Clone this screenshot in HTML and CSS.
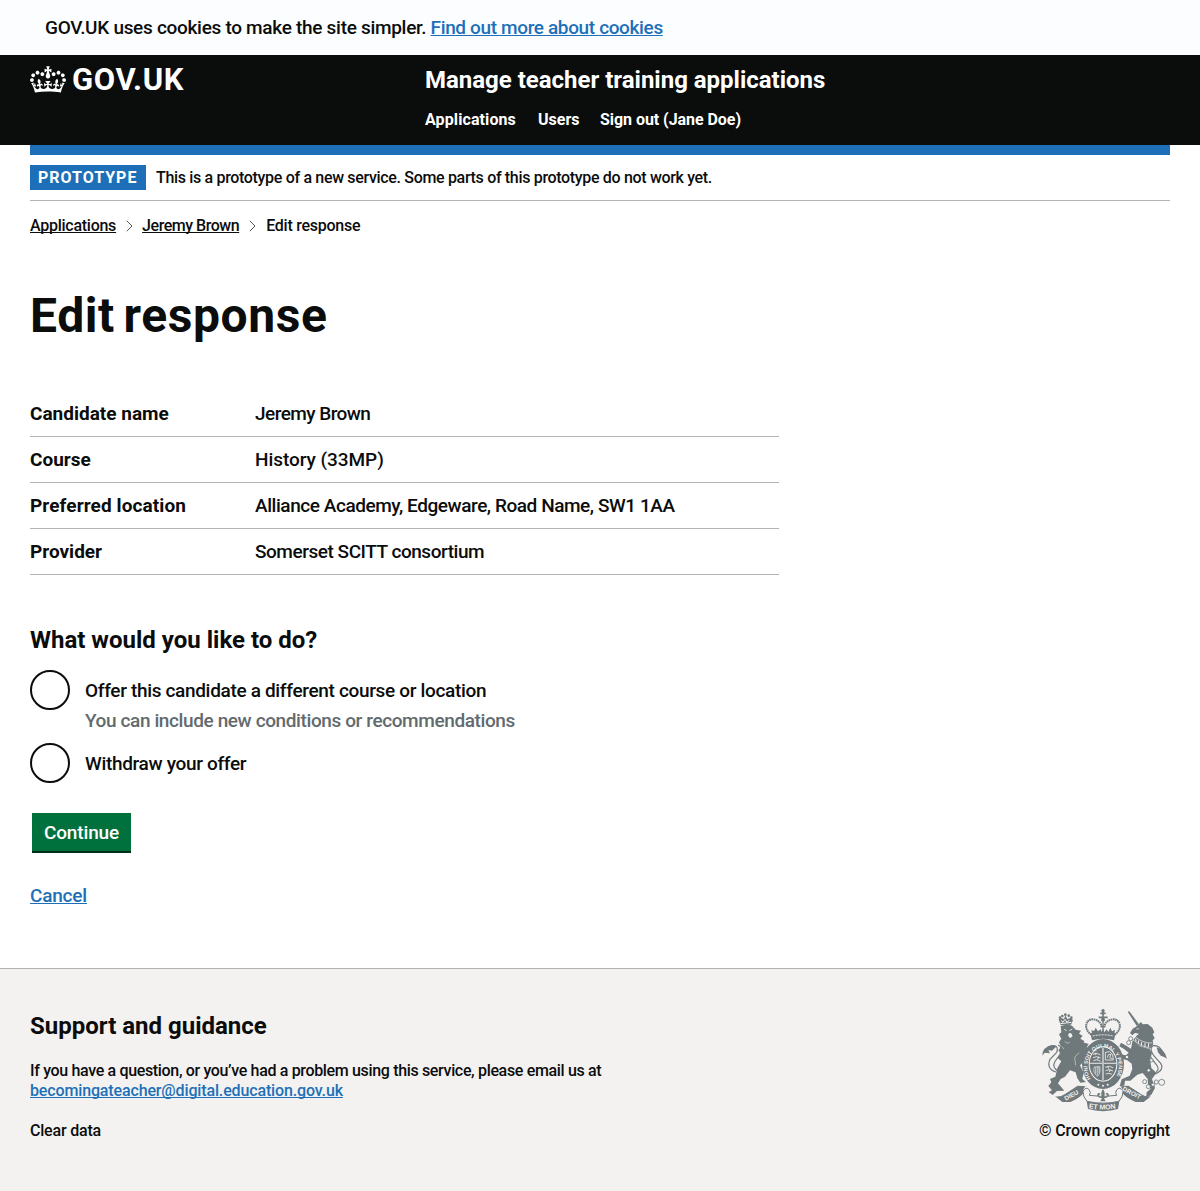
FILE: index.html
```html
<!DOCTYPE html>
<html lang="en">
<head>
<meta charset="utf-8">
<title>Edit response - Manage teacher training applications</title>
<link rel="stylesheet" href="styles.css">
</head>
<body>
<div class="cookie-banner"><span class="cookie-text">GOV.UK uses cookies to make the site simpler. </span><a class="link cookie-link" href="#">Find out more about cookies</a></div>

<header class="header">
  <div class="header-inner">
    <a class="logo" href="#">
      <svg class="crown" viewBox="0 0 132 97" width="36" height="27" aria-hidden="true"><path fill="currentColor" fill-rule="evenodd" d="M25 30.2c3.5 1.5 7.7-.2 9.1-3.7 1.5-3.6-.2-7.8-3.9-9.2-3.6-1.4-7.6.3-9.1 3.9-1.4 3.5.3 7.5 3.9 9zM9 39.5c3.6 1.5 7.8-.2 9.2-3.7 1.5-3.6-.2-7.8-3.9-9.1-3.6-1.5-7.6.2-9.1 3.8-1.4 3.5.3 7.5 3.8 9zM4.4 57.2c3.5 1.5 7.7-.2 9.1-3.8 1.5-3.6-.2-7.7-3.9-9.1-3.5-1.5-7.6.3-9.1 3.8-1.4 3.5.3 7.6 3.9 9.1zm38.3-21.4c3.5 1.5 7.7-.2 9.1-3.8 1.5-3.6-.2-7.7-3.9-9.1-3.6-1.5-7.6.3-9.1 3.8-1.3 3.6.4 7.7 3.9 9.1zm64.4-5.6c-3.6 1.5-7.8-.2-9.1-3.7-1.5-3.6.2-7.8 3.8-9.2 3.6-1.4 7.7.3 9.2 3.9 1.3 3.5-.4 7.5-3.9 9zm15.9 9.3c-3.6 1.5-7.7-.2-9.1-3.7-1.5-3.6.2-7.8 3.7-9.1 3.6-1.5 7.7.2 9.2 3.8 1.5 3.5-.3 7.5-3.8 9zm4.7 17.7c-3.6 1.5-7.8-.2-9.2-3.8-1.5-3.6.2-7.7 3.9-9.1 3.6-1.5 7.7.3 9.2 3.8 1.3 3.5-.4 7.6-3.9 9.1zM89.3 35.8c-3.6 1.5-7.8-.2-9.2-3.8-1.4-3.6.2-7.7 3.9-9.1 3.6-1.5 7.7.3 9.2 3.8 1.4 3.6-.3 7.7-3.9 9.1zM69.7 17.7l8.9 4.7V9.3l-8.9 2.8c-.2-.3-.5-.6-.9-.9L72.4 0H59.6l3.5 11.2c-.3.3-.6.5-.9.9l-8.8-2.8v13.1l8.8-4.7c.3.3.6.7.9.9l-5 15.4v.1c-.2.8-.4 1.6-.4 2.4 0 4.1 3.1 7.5 7 8.1h.2c.3 0 .7.1 1 .1.4 0 .7 0 1-.1h.2c4-.6 7.1-4.1 7.1-8.1 0-.8-.1-1.7-.4-2.4V34l-5.1-15.4c.4-.2.7-.6 1-.9zM66 92.8c16.9 0 32.8 1.1 47.1 3.2 4-16.9 8.9-26.7 14-33.5l-9.6-3.4c1 4.9 1.1 7.2 0 10.2-1.5-1.4-3-4.3-4.2-8.7L108.6 76c2.8-2 5-3.2 7.5-3.3-4.4 9.4-10 11.9-13.6 11.2-4.3-.8-6.3-4.6-5.6-7.9 1-4.7 5.7-5.9 8-.5 4.3-8.7-3-11.4-7.6-8.8 7.1-7.2 7.9-13.5 2.1-21.1-8 6.1-8.1 12.3-4.5 20.8-4.7-5.4-12.1-2.5-9.5 6.2 3.4-5.2 7.9-2 7.2 3.1-.6 4.3-6.4 7.8-13.5 7.2-10.3-.9-10.9-8-11.2-13.8 2.5-.5 7.1 1.8 11 7.3L80.2 60c-4.1 4.4-8 5.3-12.3 5.4 1.4-4.4 8-11.6 8-11.6H55.5s6.4 7.2 7.9 11.6c-4.2-.1-8-1-12.3-5.4l1.4 16.4c3.9-5.5 8.5-7.7 10.9-7.3-.3 5.8-.9 12.8-11.1 13.8-7.2.6-12.9-2.9-13.5-7.2-.7-5 3.8-8.3 7.1-3.1 2.7-8.7-4.6-11.6-9.4-6.2 3.7-8.5 3.6-14.7-4.6-20.8-5.8 7.6-5 13.9 2.2 21.1-4.7-2.6-11.9.1-7.7 8.8 2.3-5.5 7.1-4.2 8.1.5.7 3.3-1.3 7.1-5.7 7.9-3.5.7-9-1.8-13.5-11.2 2.5.1 4.7 1.3 7.5 3.3l-4.7-15.4c-1.2 4.4-2.7 7.2-4.3 8.7-1.1-3-.9-5.3 0-10.2l-9.5 3.4c5 6.9 9.9 16.7 14 33.5 14.8-2.1 30.8-3.2 47.7-3.2z"/></svg>
      <span class="logo-text">GOV.UK</span>
    </a>
    <div class="header-content">
      <a class="service-name" href="#">Manage teacher training applications</a>
      <nav class="nav"><a class="nav-apps" href="#">Applications</a><a class="nav-users" href="#">Users</a><a class="nav-out" href="#">Sign out (Jane Doe)</a></nav>
    </div>
  </div>
</header>

<div class="container">
  <div class="blue-bar"></div>
  <div class="phase-banner"><strong class="tag">PROTOTYPE</strong><span class="phase-text">This is a prototype of a new service. Some parts of this prototype do not work yet.</span></div>
  <nav class="breadcrumbs">
    <a class="crumb-apps" href="#">Applications</a>
    <svg class="chevron" viewBox="0 0 7 12" width="7" height="12" aria-hidden="true"><path d="M.8 .8 6 6 .8 11.2" fill="none" stroke="#505a5f"/></svg>
    <a class="crumb-name" href="#">Jeremy Brown</a>
    <svg class="chevron" viewBox="0 0 7 12" width="7" height="12" aria-hidden="true"><path d="M.8 .8 6 6 .8 11.2" fill="none" stroke="#505a5f"/></svg>
    <span class="crumb-current">Edit response</span>
  </nav>

  <main>
    <h1>Edit response</h1>
    <dl class="summary">
      <div class="row"><dt>Candidate name</dt><dd class="v-name">Jeremy Brown</dd></div>
      <div class="row"><dt>Course</dt><dd class="v-course">History (33MP)</dd></div>
      <div class="row"><dt class="k-location">Preferred location</dt><dd class="v-location">Alliance Academy, Edgeware, Road Name, SW1 1AA</dd></div>
      <div class="row"><dt>Provider</dt><dd class="v-provider">Somerset SCITT consortium</dd></div>
    </dl>
    <h2>What would you like to do?</h2>
    <div class="radios">
      <label class="radio"><input type="radio" name="action"><span class="radio-text"><span>Offer this candidate a different course or location</span><span class="hint">You can include new conditions or recommendations</span></span></label>
      <label class="radio"><input type="radio" name="action"><span class="radio-text">Withdraw your offer</span></label>
    </div>
    <button class="button" type="button">Continue</button>
    <p class="cancel"><a class="link" href="#">Cancel</a></p>
  </main>
</div>

<footer class="footer">
  <div class="footer-inner">
    <div class="support">
      <h2>Support and guidance</h2>
      <p><span class="support-text">If you have a question, or you’ve had a problem using this service, please email us at</span><br><a class="link email" href="#">becomingateacher@digital.education.gov.uk</a></p>
      <p class="clear">Clear data</p>
    </div>
    <div class="copyright">
      <svg class="crest" viewBox="36 27 375 306" width="125" height="102" aria-hidden="true">
        <defs>
          <path id="garter" d="M184 239A47 58 0 1 1 254 239"/>
          <path id="dieu" d="M107 302 166 271"/>
          <path id="mon" d="M176 325Q219 332 268 324"/>
          <path id="droit" d="M276 271 346 307"/>
        </defs>
        <!-- lion -->
        <path d="M78 216Q48 206 60 178L80 157Q87 139 71 137Q52 136 47 155M84 213Q66 203 74 186L90 163Q98 140 84 135" fill="none" stroke="#6f787b" stroke-width="3.5"/>
        <path d="M37 167Q37 141 66 136L80 139 66 152 55 150 60 160 44 158Z" fill="#6f787b"/>
        <g fill="#6f787b">
          <path d="M92 76 86 58 94 54 102 57 106 46 112 57 122 54 129 60 123 74Z"/>
          <path d="M92 79Q109 71 126 77L137 89 153 92 147 101 158 107 151 116 163 123 156 135 164 150 174 164 163 162 159 187 150 196 161 219 157 237 168 246 151 248 142 235 137 217 120 211 105 230 92 237 84 250 103 272 81 273 68 285 56 276 66 271 55 258 64 247 60 237 76 230 82 204 94 184 83 174 92 161 85 151 93 140 87 127 94 116 87 103 94 97Z"/>
          <path d="M137 128 155 137 157 126 176 132 170 142 181 148 168 155 150 151Z"/>
        </g>
        <g fill="none" stroke="#f3f2f1">
          <path stroke-width="3" d="M91 71 124 67M94 61 98 67 105 58 111 67 118 60"/>
          <path stroke-width="2.5" d="M103 88 110 92M118 92 127 87"/>
          <path stroke-width="1.5" d="M104 124 113 130 120 126M147 158 134 172 137 196M96 140 102 148"/>
        </g>
        <path d="M115 102 120 98 126 103 127 110 120 114 115 108Z" fill="#f3f2f1"/>
        <g fill="#6f787b"><circle cx="90" cy="53" r="4"/><circle cx="97" cy="48" r="4"/><circle cx="106" cy="44" r="4"/><circle cx="116" cy="47" r="4"/><circle cx="124" cy="53" r="4"/></g>

        <!-- unicorn -->
        <path d="M371 223Q405 211 392 190L372 168Q356 146 369 137Q390 134 399 159M379 215Q390 207 379 194L365 176Q350 153 361 140" fill="none" stroke="#6f787b" stroke-width="3.5"/>
        <g fill="#6f787b">
          <path d="M293 35 298 34 327 73 320 77Z"/>
          <path d="M318 80 333 66 338 73 353 72 367 83 373 97 368 103 374 115 368 121 370 133 360 146 329 138 308 122 318 109 327 101 315 99 307 106 300 99 308 86Z"/>
          <path d="M308 120 329 139 359 147 366 160 360 177 364 204 379 218 366 237 375 264 364 284 348 295 350 277 362 266 354 254 353 237 338 219 322 224 301 242 285 242 283 257 269 258 275 238 299 227 307 207 305 191 292 181 275 176 271 163 288 166 296 158 283 148 268 139 273 128 289 137 303 146Z"/>
          <path d="M380 142Q405 149 411 176Q397 167 393 168L384 157Z"/>
        </g>
        <g fill="none" stroke="#f3f2f1">
          <path stroke-width="2" d="M319 87 327 86M309 120Q332 140 361 145M314 109Q337 130 367 129"/>
          <path stroke-width="3" d="M317 116 318 125M326 121 325 131M335 126 334 137M345 129 345 140M356 130 355 141"/>
        </g>
        <g fill="#f3f2f1" stroke="#6f787b" stroke-width="2.5">
          <circle cx="302" cy="116" r="6"/><circle cx="296" cy="128" r="6"/><circle cx="291" cy="171" r="5"/><circle cx="364" cy="181" r="5"/>
          <circle cx="356" cy="211" r="5"/><circle cx="344" cy="245" r="6"/><circle cx="355" cy="260" r="6"/><circle cx="369" cy="254" r="5"/><circle cx="379" cy="246" r="6"/><circle cx="395" cy="247" r="9"/>
        </g>

        <!-- crown -->
        <g fill="none" stroke="#6f787b">
          <path stroke-width="5" d="M219 31V63M211 40H227M206 52H233"/>
          <path stroke-width="6" stroke-dasharray="5 1.5" d="M184 104C157 84 169 56 190 58Q213 61 216 84M254 104C281 84 269 56 248 58Q225 61 222 84"/>
          <path stroke-width="4" d="M219 61V98M212 79H226"/>
        </g>
        <g fill="#6f787b">
          <path d="M181 99 257 99 252 121Q219 111 186 121Z"/>
          <path d="M186 99 184 90 192 93 197 83 204 94 212 88 216 97 219 85 223 97 230 88 235 96 241 83 246 94 255 89 253 103 185 103Z"/>
          <circle cx="219" cy="32" r="5"/><circle cx="219" cy="59" r="6"/>
        </g>
        <path d="M188 108Q219 101 251 108" stroke="#f3f2f1" stroke-width="3" stroke-dasharray="6 3" fill="none"/>

        <!-- garter and shield -->
        <ellipse cx="219" cy="192" rx="63" ry="75" fill="#6f787b"/>
        <ellipse cx="219" cy="192" rx="43" ry="53" fill="#f3f2f1"/>
        <ellipse cx="219" cy="192" rx="40" ry="50" fill="#6f787b"/>
        <path d="M219 143V241M179 190H259" stroke="#f3f2f1" stroke-width="4"/>
        <path d="M219 144V240M180 190H258" stroke="#6f787b" stroke-width="1"/>
        <g fill="none" stroke="#f3f2f1" stroke-width="2.5">
          <path d="M189 163 202 160 211 165M189 173 200 170 212 174M190 182 201 179 212 184M195 158 198 165M206 170 203 178"/>
          <path d="M226 157V180H250L248 164 239 155ZM232 173 235 164 243 163 239 173 247 176"/>
          <path d="M193 201Q187 218 203 229Q213 218 209 200ZM197 202V221M202 200V226M207 200V219" stroke-width="2"/>
          <path d="M226 202 238 199 249 203M227 212 237 209 249 213M227 222 237 220 246 223M233 199 236 206M241 209 238 216"/>
        </g>
        <text class="motto motto-garter"><textPath href="#garter" startOffset="3">HONI SOIT QUI MAL Y PENSE</textPath></text>
        <g fill="#f3f2f1"><circle cx="205" cy="254" r="3"/><circle cx="219" cy="257" r="3"/><circle cx="233" cy="254" r="3"/></g>

        <!-- ribbon -->
        <g fill="#6f787b">
          <path d="M75 289Q90 292 105 282L143 257 167 259Q157 267 161 279Q148 295 121 306H97Z"/>
          <path d="M363 289Q348 292 333 282L295 257 271 259Q281 267 277 279Q290 295 317 306H341Z"/>
          <path d="M170 303Q219 317 268 303L264 327Q219 340 174 327Z"/>
        </g>
        <path d="M171 304Q157 288 159 273Q169 258 178 270Q184 278 178 286Q219 293 260 286Q254 278 260 270Q269 258 279 273Q281 288 267 304Q219 315 171 304Z" fill="#f3f2f1" stroke="#6f787b" stroke-width="3"/>
        <path d="M219 267Q209 282 217 290Q208 293 206 286Q210 284 211 280Q200 277 202 288Q205 294 216 295L211 304H227L222 295Q233 294 236 288Q238 277 227 280Q228 284 232 286Q230 293 221 290Q229 282 219 267Z" fill="#6f787b"/>
        <g class="motto">
          <text font-size="19"><textPath href="#dieu">DIEU</textPath></text>
          <text font-size="21"><textPath href="#mon">ET MON</textPath></text>
          <text font-size="19"><textPath href="#droit">DROIT</textPath></text>
        </g>
      </svg>
      <a class="copyright-text" href="#">© Crown copyright</a>
    </div>
  </div>
</footer>
</body>
</html>
```
FILE: styles.css
```css
* { box-sizing: border-box; }
body { margin: 0; background: #fff; color: #0b0c0c; font: 500 19px/25px Roboto, "Liberation Sans", sans-serif; letter-spacing: -0.3px; font-kerning: normal; }
a { color: inherit; text-decoration: none; }
h1, h2, p, dl, dd { margin: 0; }
.link { color: #1d70b8; text-decoration: underline; text-decoration-thickness: 1px; text-underline-offset: 1px; text-decoration-skip-ink: none; }

.cookie-banner { height: 55px; padding: 15px 45px; background: #fcfdff; white-space: pre; }
.cookie-link { letter-spacing: -0.36px; }

.header { height: 90px; background: #0b0c0c; color: #fff; font-weight: 700; letter-spacing: 0; }
.header-inner { display: flex; margin: 0 30px; }
.logo { display: flex; gap: 6px; width: 395px; padding-top: 10px; }
.crown { display: block; margin-top: 1px; }
.logo-text { font-size: 31px; line-height: 30px; letter-spacing: 0.65px; }
.header-content { display: flex; flex-direction: column; padding-top: 10px; }
.service-name { font-size: 24px; line-height: 30px; letter-spacing: -0.01px; }
.nav { display: flex; margin-top: 15px; font-size: 16px; line-height: 20px; }
.nav-apps { width: 113px; letter-spacing: 0.1px; }
.nav-users { width: 62px; }
.nav-out { letter-spacing: -0.05px; }

.container { margin: 0 30px; }
.blue-bar { height: 10px; background: #1d70b8; }
.phase-banner { display: flex; height: 46px; padding-top: 10px; border-bottom: 1px solid #b1b4b6; font-size: 16px; }
.tag { width: 116px; height: 25px; margin-right: 10px; padding-left: 8px; background: #1d70b8; color: #fff; font-weight: 700; letter-spacing: 0.98px; }
.phase-text { letter-spacing: -0.33px; }

.breadcrumbs { display: flex; margin-top: 15px; font-size: 16px; line-height: 20px; letter-spacing: -0.26px; }
.breadcrumbs a { text-decoration: underline; text-decoration-thickness: 1px; text-underline-offset: 1px; text-decoration-skip-ink: none; }
.breadcrumbs .crumb-name { letter-spacing: -0.47px; }
.chevron { margin: 4px 9px 0 10px; }
.crumb-current { margin-left: 1px; }

h1 { margin: 55px 0 50px; font-size: 48px; line-height: 50px; letter-spacing: 0.6px; word-spacing: -4px; }
h2 { font-size: 24px; line-height: 30px; font-weight: 700; letter-spacing: 0; }
.summary { width: 749px; margin-bottom: 50px; }
.row { display: grid; grid-template-columns: 225px 1fr; padding: 10px 0; border-bottom: 1px solid #b1b4b6; }
.row dt { font-weight: 700; letter-spacing: 0; }
.row .k-location { letter-spacing: 0.1px; }
.v-name { letter-spacing: -0.55px; }
.v-course { letter-spacing: -0.05px; }
.v-location { letter-spacing: -0.44px; }
.v-provider { letter-spacing: -0.46px; }

.radios { display: grid; gap: 10px; margin-top: 15px; }
.radio { display: flex; gap: 15px; }
.radio input { appearance: none; flex: none; width: 40px; height: 40px; margin: 0; border: 2px solid #0b0c0c; border-radius: 50%; background: #fff; }
.radio-text { display: flex; flex-direction: column; gap: 5px; padding-top: 8px; letter-spacing: -0.33px; }
.hint { color: #626a6e; letter-spacing: -0.39px; }
.radio:first-child { height: 63px; }
.button { display: block; width: 99px; height: 38px; margin: 30px 0 0 2px; padding: 0; border: 0; border-radius: 0; background: #00703c; box-shadow: 0 2px 0 #002d18; color: #fff; font: inherit; letter-spacing: -0.16px; }
.cancel { margin-top: 32px; letter-spacing: -0.2px; }

.footer { height: 223px; margin-top: 60px; border-top: 1px solid #b1b4b6; background: #f3f2f1; font-size: 16px; line-height: 20px; }
.footer-inner { display: flex; justify-content: space-between; margin: 0 30px; padding-top: 40px; }
.support h2 { margin: 2px 0 20px; }
.support-text { letter-spacing: -0.34px; }
.email { letter-spacing: -0.14px; }
.clear { margin-top: 20px; letter-spacing: -0.2px; }
.copyright { display: flex; flex-direction: column; align-items: flex-end; }
.crest { display: block; margin-right: 3px; overflow: visible; }
.copyright-text { margin-top: 10px; letter-spacing: -0.15px; }
.motto { fill: #f3f2f1; font-family: "Liberation Sans", sans-serif; font-weight: 700; letter-spacing: 0; }
.motto-garter { font-size: 16px; letter-spacing: 0.2px; }
```
